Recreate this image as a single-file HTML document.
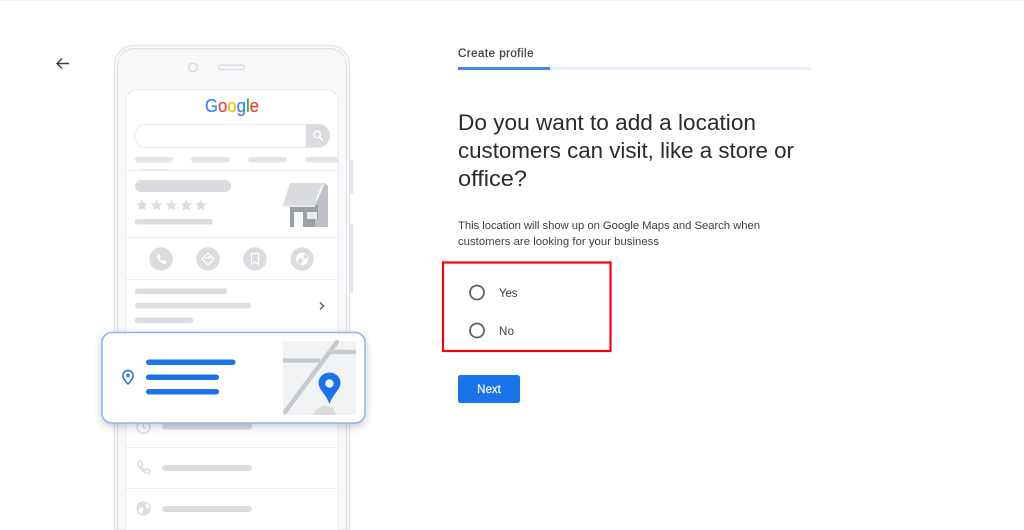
<!DOCTYPE html>
<html lang="en">
<head>
<meta charset="utf-8">
<title>Create profile</title>
<style>
html,body{margin:0;padding:0;background:#fff;width:1024px;height:530px;overflow:hidden}
svg{display:block;font-family:"Liberation Sans",sans-serif}
</style>
</head>
<body>
<svg width="1024" height="530" viewBox="0 0 1024 530" xmlns="http://www.w3.org/2000/svg">
<defs>
<filter id="sh" x="-10%" y="-20%" width="120%" height="150%">
<feDropShadow dx="0" dy="3" stdDeviation="4" flood-color="#3c4043" flood-opacity=".28"/>
</filter>
</defs>
<rect x="0" y="0" width="1024" height="1" fill="#f1f3f4"/>

<!-- back arrow -->
<path d="M69 63.500H57M62 58.500l-5 5 5 5" fill="none" stroke="#3c4043" stroke-width="1.400"/>

<!-- phone -->
<rect x="349" y="160" width="4" height="34" fill="#e3e5e8"/>
<rect x="349" y="224" width="4" height="69" fill="#e3e5e8"/>
<path d="M114.500 530V65.500a20 20 0 0 1 20-20h195a20 20 0 0 1 20 20V530z" fill="#fff" stroke="#e3e5e8" stroke-width="1.500"/>
<path d="M117.500 530V65.500a17 17 0 0 1 17-17h195a17 17 0 0 1 17 17V530z" fill="#f8f9fa" stroke="#e3e5e8" stroke-width="1.500"/>
<circle cx="193" cy="67.500" r="4.300" fill="none" stroke="#dadce0" stroke-width="1.500"/>
<rect x="218.500" y="65" width="26" height="4.500" rx="2.250" fill="#f8f9fa" stroke="#dadce0" stroke-width="1.200"/>
<path d="M125.700 530V101.500a12 12 0 0 1 12-12h188.500a12 12 0 0 1 12 12V530z" fill="#fff" stroke="#e8eaed"/>

<!-- google -->
<text x="205" y="112" font-size="18.500" stroke-width=".25" textLength="54" lengthAdjust="spacingAndGlyphs"><tspan fill="#4285f4" stroke="#4285f4">G</tspan><tspan fill="#ea4335" stroke="#ea4335">o</tspan><tspan fill="#fbbc05" stroke="#fbbc05">o</tspan><tspan fill="#4285f4" stroke="#4285f4">g</tspan><tspan fill="#34a853" stroke="#34a853">l</tspan><tspan fill="#ea4335" stroke="#ea4335">e</tspan></text>

<!-- search -->
<rect x="134.500" y="124.500" width="195" height="23" rx="11.500" fill="#fff" stroke="#e8eaed"/>
<path d="M306 124h12.500a11.500 11.500 0 0 1 0 23H306z" fill="#dadce0"/>
<circle cx="317" cy="134.500" r="3.300" fill="none" stroke="#fff" stroke-width="1.300"/>
<path d="M319.500 137l3.500 3.500" stroke="#fff" stroke-width="1.600"/>

<!-- tabs -->
<g fill="#e3e5e8">
<rect x="135" y="157" width="38" height="5.500" rx="2.700"/>
<rect x="191" y="157" width="39" height="5.500" rx="2.700"/>
<rect x="248" y="157" width="39" height="5.500" rx="2.700"/>
<path d="M307.700 157H338v5.500h-30.300a2.750 2.750 0 0 1 0-5.500z"/>
<rect x="141" y="169" width="27" height="1.500"/>
</g>
<rect x="126" y="170" width="212" height="1" fill="#eceef0"/>

<!-- listing -->
<rect x="135" y="180" width="96" height="12" rx="6" fill="#dadce0"/>
<g fill="#dadce0">
<path d="M142 199.500l1.700 3.700 4 .4-3 2.700.9 4-3.600-2.100-3.600 2.100.9-4-3-2.700 4-.4z"/>
<path d="M156.700 199.500l1.700 3.700 4 .4-3 2.700.9 4-3.600-2.100-3.600 2.100.9-4-3-2.700 4-.4z"/>
<path d="M171.500 199.500l1.700 3.700 4 .4-3 2.700.9 4-3.600-2.100-3.600 2.100.9-4-3-2.700 4-.4z"/>
<path d="M186.200 199.500l1.700 3.700 4 .4-3 2.700.9 4-3.600-2.100-3.600 2.100.9-4-3-2.700 4-.4z"/>
<path d="M200.800 199.500l1.700 3.700 4 .4-3 2.700.9 4-3.600-2.100-3.600 2.100.9-4-3-2.700 4-.4z"/>
</g>
<rect x="135" y="219" width="78" height="5.500" rx="2.700" fill="#dadce0"/>

<!-- store -->
<path d="M325 183l3 3v41h-38v-22h25z" fill="#bdc1c6"/>
<path d="M290 205h25v7h-25zM290 212h4v15h-4zM303 212h4v15h-4zM307 219h8v8h-8zM315 205h3v14h-3z" fill="#9aa0a6"/>
<path d="M290 183h35c-4 3-8 12-10 22h-32z" fill="#dadce0"/>
<path d="M283 205h32v2h-32z" fill="#e8eaed"/>
<rect x="294" y="212" width="9" height="15" fill="#f8f9fa"/>
<rect x="307" y="212" width="10" height="7" fill="#e8eaed"/>

<rect x="126" y="237" width="212" height="1" fill="#eceef0"/>

<!-- actions -->
<g fill="#dadce0">
<circle cx="161" cy="259" r="11.700"/>
<circle cx="208" cy="259" r="11.700"/>
<circle cx="255" cy="259" r="11.700"/>
<circle cx="302" cy="259" r="11.700"/>
</g>
<path d="M157 254.500c-.2 5 3.500 9 8.500 9.500l1-2.700-2.700-1.300-1.300 1.300c-1.300-.7-2.500-1.900-3.200-3.200l1.300-1.300-1.200-2.800z" fill="#fff"/>
<path d="M208 253l6 6-6 6-6-6z" fill="none" stroke="#fff" stroke-width="1.300"/>
<path d="M206 259v-1.500h4M208.800 256l1.600 1.500-1.600 1.500" fill="none" stroke="#fff" stroke-width=".9"/>
<path d="M251.500 253.500h7v11l-3.500-2.500-3.500 2.500z" fill="none" stroke="#fff" stroke-width="1.300"/>
<circle cx="302" cy="259" r="6.200" fill="#fff"/>
<path d="M297 262l3-4 3 1-1 3-1.500 3zM304 254l3 2-.5 3-3-1z" fill="#dadce0"/>

<rect x="126" y="279" width="212" height="1" fill="#eceef0"/>

<!-- info lines -->
<g fill="#dadce0">
<rect x="135" y="288.500" width="92" height="5.500" rx="2.700"/>
<rect x="135" y="303" width="116" height="5.500" rx="2.700"/>
<rect x="135" y="317.500" width="58" height="5.500" rx="2.700"/>
</g>
<path d="M320 302.500l3.500 3.500-3.500 3.500" fill="none" stroke="#5f6368" stroke-width="1.500"/>

<!-- lower rows -->
<circle cx="143.500" cy="427" r="6.300" fill="none" stroke="#dadce0" stroke-width="1.500"/>
<path d="M143.500 423.500v4l2.500 1.500" fill="none" stroke="#dadce0" stroke-width="1.200"/>
<rect x="162" y="423.500" width="90" height="6" rx="3" fill="#dadce0"/>
<rect x="126" y="447" width="212" height="1" fill="#eceef0"/>
<path d="M138 461.500l2.800-.6 1.800 3.600-1.600 1.600c1 1.900 2.300 3.300 4.300 4.300l1.600-1.600 3.300 1.700-.5 3c-6.900-.2-11.900-5.700-11.700-12z" fill="none" stroke="#dadce0" stroke-width="1.500"/>
<rect x="162" y="465" width="90" height="6" rx="3" fill="#dadce0"/>
<rect x="126" y="488" width="212" height="1" fill="#eceef0"/>
<circle cx="143.500" cy="508.500" r="7.200" fill="#dadce0"/>
<path d="M138 511l2.500-4 3 1-.7 3-1.200 3.500zM146 503l3 2.500-.5 3-3-1z" fill="#fff"/>
<rect x="162" y="506" width="90" height="6" rx="3" fill="#dadce0"/>

<!-- floating card -->
<rect x="102" y="332.500" width="263" height="90.500" rx="10" fill="#fff" stroke="#8ab4f0" stroke-width="1.500" filter="url(#sh)"/>
<path d="M128 370.500c-3 0-5.200 2.300-5.200 5 0 3.500 5.200 8.500 5.200 8.500s5.200-5 5.200-8.500c0-2.700-2.200-5-5.200-5z" fill="none" stroke="#1a73e8" stroke-width="1.500"/>
<circle cx="128" cy="375.500" r="1.700" fill="#1a73e8"/>
<g fill="#1a73e8">
<rect x="146" y="359.500" width="89.500" height="5.500" rx="2.700"/>
<rect x="146" y="374.500" width="73" height="5.500" rx="2.700"/>
<rect x="146" y="389" width="73" height="5.500" rx="2.700"/>
</g>

<!-- map -->
<rect x="283" y="341" width="73" height="74" fill="#f1f3f4"/>
<path d="M283 360.500h37M331 352h25" stroke="#c6c9cd" stroke-width="4.500" fill="none"/>
<path d="M337 342l-52 70" stroke="#c6c9cd" stroke-width="4.500" fill="none" stroke-linecap="round"/>
<path d="M313 415l5-7 7-2.500 8 2.500 3 7z" fill="#dadce0"/>
<path d="M329.500 372.500c-6.200 0-11 4.700-11 10.500 0 6.500 7.500 11 11 21 3.500-10 11-14.500 11-21 0-5.800-4.800-10.500-11-10.500z" fill="#1a73e8"/>
<circle cx="329.500" cy="383.500" r="4.200" fill="#f1f3f4"/>

<!-- right column -->
<text x="458" y="57" font-size="11.500" fill="#3c4043" stroke="#3c4043" stroke-width=".25" textLength="75.500" lengthAdjust="spacing">Create profile</text>
<rect x="458" y="67" width="353" height="3" fill="#e8f0fe"/>
<rect x="458" y="67" width="92" height="3" fill="#4285f4"/>

<g font-size="22.500" fill="#2a2b2e">
<text x="458" y="130" textLength="298" lengthAdjust="spacingAndGlyphs">Do you want to add a location</text>
<text x="458" y="158" textLength="336" lengthAdjust="spacingAndGlyphs">customers can visit, like a store or</text>
<text x="458" y="186" textLength="69" lengthAdjust="spacingAndGlyphs">office?</text>
</g>
<g font-size="11.300" fill="#3c4043">
<text x="458" y="229" textLength="302" lengthAdjust="spacing">This location will show up on Google Maps and Search when</text>
<text x="458" y="245" textLength="201" lengthAdjust="spacing">customers are looking for your business</text>
</g>

<!-- red highlight -->
<rect x="443" y="262.500" width="167.500" height="88.500" fill="none" stroke="#f5000f" stroke-width="2.200"/>

<!-- radios -->
<circle cx="477" cy="292.500" r="7" fill="none" stroke="#5f6368" stroke-width="1.800"/>
<circle cx="477" cy="330.500" r="7" fill="none" stroke="#5f6368" stroke-width="1.800"/>
<text x="499" y="297" font-size="11.500" fill="#3c4043" textLength="18.500" lengthAdjust="spacing">Yes</text>
<text x="499" y="335" font-size="11.500" fill="#3c4043" textLength="15" lengthAdjust="spacing">No</text>

<!-- button -->
<rect x="458" y="375" width="62" height="28" rx="2.500" fill="#1a73e8"/>
<text x="489" y="393" font-size="11.500" fill="#fff" stroke="#fff" stroke-width=".2" text-anchor="middle">Next</text>
</svg>
</body>
</html>
